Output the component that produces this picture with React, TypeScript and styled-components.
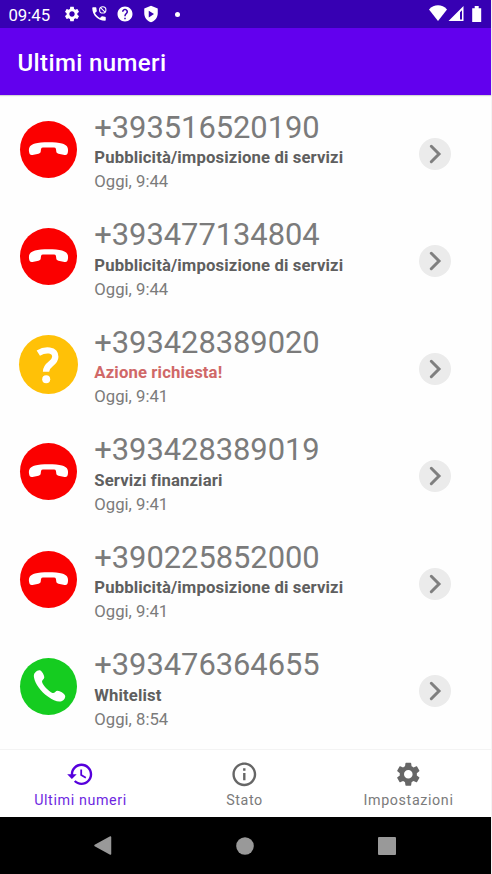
import React from "react";
import styled, { createGlobalStyle } from "styled-components";

const GlobalStyle = createGlobalStyle`
  *, *::before, *::after { box-sizing: border-box; }
  html, body { margin: 0; padding: 0; background: #f4f4f4; }
  body { font-family: Roboto, "Noto Sans", sans-serif; overflow: hidden; }
  svg { display: block; flex: none; }
`;

const Screen = styled.div`
  width: 491px;
  height: 874px;
  display: flex;
  flex-direction: column;
  background: #fefefe;
`;

const StatusBar = styled.header`
  height: 28px;
  flex: none;
  display: flex;
  align-items: center;
  justify-content: space-between;
  padding: 0 8px 0 8.4px;
  background: #3700b3;
  color: #fff;
`;

const StatusGroup = styled.div<{ $gap: number }>`
  display: flex;
  align-items: center;
  gap: ${(p) => p.$gap}px;
`;

const Clock = styled.time`
  width: 46.6px;
  font-size: 16.8px;
  line-height: 20px;
  padding-top: 1.5px;
`;

const Dot = styled.span`
  width: 5px;
  height: 5px;
  margin-left: 7px;
  border-radius: 50%;
  background: #fff;
`;

const AppBar = styled.div`
  height: 67px;
  flex: none;
  display: flex;
  align-items: center;
  padding: 2px 17.5px 0;
  background: #6200ee;
  box-shadow: 0 1px 1px rgba(0, 0, 0, 0.16);
`;

const Title = styled.h1`
  margin: 0;
  color: #fff;
  font-size: 24px;
  line-height: 30px;
  font-weight: 500;
  letter-spacing: 0.38px;
`;

const CallList = styled.main`
  flex: 1;
  min-height: 0;
  overflow: hidden;
  padding-top: 9px;
`;

const CallRow = styled.article`
  height: 107.5px;
  display: flex;
  align-items: flex-start;
  padding: 0 40px 0 19px;
`;

const Badge = styled.div<{ $color: string; $size: number }>`
  width: ${(p) => p.$size}px;
  height: ${(p) => p.$size}px;
  margin: ${(p) => 45 - p.$size / 2}px ${(p) => 46.3 - p.$size / 2}px 0 ${(p) => 29 - p.$size / 2}px;
  flex: none;
  display: flex;
  align-items: center;
  justify-content: center;
  border-radius: 50%;
  background: ${(p) => p.$color};
`;

const CallText = styled.div`
  flex: 1;
  min-width: 0;
  color: #7b7b7b;
  white-space: nowrap;
`;

const PhoneNumber = styled.div`
  padding-top: 5.7px;
  font-size: 30.9px;
  line-height: 36px;
  letter-spacing: -0.04px;
`;

const Reason = styled.div<{ $alert?: boolean }>`
  margin-top: 2.5px;
  font-size: 16.7px;
  line-height: 20px;
  font-weight: 700;
  letter-spacing: 0.13px;
  color: ${(p) => (p.$alert ? "#d06868" : "#5f5f5f")};
`;

const CallTime = styled.div`
  margin-top: 4.2px;
  font-size: 16.7px;
  line-height: 20px;
`;

const OpenButton = styled.button`
  width: 32px;
  height: 32px;
  margin-top: 33.5px;
  padding: 0;
  flex: none;
  display: flex;
  align-items: center;
  justify-content: center;
  border: 0;
  border-radius: 50%;
  background: #ebebeb;
`;

const BottomNav = styled.nav`
  height: 68px;
  flex: none;
  display: grid;
  grid-template-columns: repeat(3, 164px);
  justify-content: center;
  padding-right: 2px;
  border-top: 1px solid #f3f3f3;
  background: #fff;
`;

const NavItem = styled.a<{ $active?: boolean }>`
  display: flex;
  flex-direction: column;
  align-items: center;
  padding-top: 9.5px;
  color: ${(p) => (p.$active ? "#5600dc" : "#666")};
`;

const NavLabel = styled.span`
  margin-top: 3px;
  font-size: 14.3px;
  line-height: 18px;
  letter-spacing: 0.62px;
  opacity: 0.86;
`;

const SystemBar = styled.footer`
  height: 57px;
  flex: none;
  display: grid;
  grid-template-columns: repeat(3, 142px);
  justify-content: center;
  justify-items: center;
  align-items: center;
  padding-right: 2px;
  background: #000;
`;

const GEAR =
  "M19.14 12.94c.04-.3.06-.61.06-.94 0-.32-.02-.64-.07-.94l2.03-1.58c.18-.14.23-.41.12-.61l-1.92-3.32c-.12-.22-.37-.29-.59-.22l-2.39.96c-.5-.38-1.03-.7-1.62-.94l-.36-2.54c-.04-.24-.24-.41-.48-.41h-3.84c-.24 0-.43.17-.47.41l-.36 2.54c-.59.24-1.13.57-1.62.94l-2.39-.96c-.22-.08-.47 0-.59.22L2.74 8.87c-.12.21-.08.47.12.61l2.03 1.58c-.05.3-.09.63-.09.94s.02.64.07.94l-2.03 1.58c-.18.14-.23.41-.12.61l1.92 3.32c.12.22.37.29.59.22l2.39-.96c.5.38 1.03.7 1.62.94l.36 2.54c.05.24.24.41.48.41h3.84c.24 0 .44-.17.47-.41l.36-2.54c.59-.24 1.13-.56 1.62-.94l2.39.96c.22.08.47 0 .59-.22l1.92-3.32c.12-.22.07-.47-.12-.61l-2.01-1.58zM12 15.6c-1.98 0-3.6-1.62-3.6-3.6s1.62-3.6 3.6-3.6 3.6 1.62 3.6 3.6-1.62 3.6-3.6 3.6z";
const HISTORY =
  "M13 3c-4.97 0-9 4.03-9 9H1l3.89 3.89.07.14L9 12H6c0-3.87 3.13-7 7-7s7 3.13 7 7-3.13 7-7 7c-1.93 0-3.68-.79-4.94-2.06l-1.42 1.42C8.27 19.99 10.51 21 13 21c4.97 0 9-4.03 9-9s-4.03-9-9-9zm-1 5v5l4.28 2.54.72-1.21-3.5-2.08V8H12z";
const INFO =
  "M11 7h2v2h-2zm0 4h2v6h-2zm1-9C6.48 2 2 6.48 2 12s4.48 10 10 10 10-4.48 10-10S17.52 2 12 2zm0 18c-4.41 0-8-3.59-8-8s3.59-8 8-8 8 3.59 8 8-3.59 8-8 8z";
const HELP =
  "M12 2C6.48 2 2 6.48 2 12s4.48 10 10 10 10-4.48 10-10S17.52 2 12 2zm1 17h-2v-2h2v2zm2.07-7.75l-.9.92C13.45 12.9 13 13.5 13 15h-2v-.5c0-1.1.45-2.1 1.17-2.83l1.24-1.26c.37-.36.59-.86.59-1.41 0-1.1-.9-2-2-2s-2 .9-2 2H8c0-2.21 1.79-4 4-4s4 1.79 4 4c0 .88-.36 1.68-.93 2.25z";
const PHONE =
  "M20 15.5c-1.25 0-2.45-.2-3.57-.57-.35-.11-.74-.03-1.02.24l-2.2 2.2c-2.83-1.44-5.15-3.75-6.59-6.59l2.2-2.2c.28-.28.36-.67.25-1.02C8.7 6.45 8.5 5.25 8.5 4c0-.55-.45-1-1-1H4c-.55 0-1 .45-1 1 0 9.39 7.61 17 17 17 .55 0 1-.45 1-1v-3.5c0-.55-.45-1-1-1z";

function Glyph({ d, size }: { d: string; size: number }) {
  return (
    <svg width={size} height={size} viewBox="0 0 24 24" fill="currentColor">
      <path d={d} />
    </svg>
  );
}

type Kind = "blocked" | "unknown" | "allowed";

function KindBadge({ kind }: { kind: Kind }) {
  if (kind === "blocked") {
    return (
      <Badge $color="#fb0000" $size={57}>
        <svg width="57" height="57" viewBox="0 0 57 57" fill="#fff">
          <path d="M9.1 31C8.3 25.8 10.5 24 15 22.5C21 20.8 36 20.8 42 22.500C46.500 24 48.700 25.800 47.900 31C47.600 33.500 46.500 34.300 44.500 33.900L38.500 32.800C36.800 32.400 36.300 31.500 36.200 29.800L35.900 27.700Q35.500 26.400 34 26.400H23Q21.500 26.400 21.100 27.700L20.800 29.800C20.700 31.500 20.200 32.400 18.500 32.800L12.500 33.900C10.500 34.300 9.400 33.500 9.100 31Z" />
        </svg>
      </Badge>
    );
  }
  if (kind === "unknown") {
    return (
      <Badge $color="#ffc107" $size={59}>
        <svg width="59" height="59" viewBox="0 0 59 59">
          <path d="M19.3 18.2C26.5 13.7 36.3 14.3 36.3 21.8C36.3 29 27 28.5 27 36.7" fill="none" stroke="#fff" strokeWidth="6.3" />
          <circle cx="27.2" cy="44.3" r="4" fill="#fff" />
        </svg>
      </Badge>
    );
  }
  return (
    <Badge $color="#15cc20" $size={57}>
      <svg width="57" height="57" viewBox="0 0 57 57" fill="#fff">
        <path d="M15.2 14.5C17 12.4 19.2 11.6 20.5 12.5C22.3 13.6 24.2 17 24.3 19.2C24.4 21.3 21.9 21.6 22 23.6C22.3 27 28.8 33.7 32.5 35C34.7 35.7 35.3 32.8 37.6 32.8C40 32.9 44 35.4 45 37.4C45.8 39.2 44.2 42 41.5 43.2C38.2 44.4 33 42.3 28.2 38.8C20.6 33.4 15.2 26 14 19.5C13.7 17.4 13.8 16 15.2 14.5Z" />
      </svg>
    </Badge>
  );
}

interface Call {
  number: string;
  reason: string;
  time: string;
  kind: Kind;
}

const calls: Call[] = [
  { number: "+393516520190", reason: "Pubblicità/imposizione di servizi", time: "Oggi, 9:44", kind: "blocked" },
  { number: "+393477134804", reason: "Pubblicità/imposizione di servizi", time: "Oggi, 9:44", kind: "blocked" },
  { number: "+393428389020", reason: "Azione richiesta!", time: "Oggi, 9:41", kind: "unknown" },
  { number: "+393428389019", reason: "Servizi finanziari", time: "Oggi, 9:41", kind: "blocked" },
  { number: "+390225852000", reason: "Pubblicità/imposizione di servizi", time: "Oggi, 9:41", kind: "blocked" },
  { number: "+393476364655", reason: "Whitelist", time: "Oggi, 8:54", kind: "allowed" },
];

const tabs = [
  { label: "Ultimi numeri", icon: HISTORY, active: true },
  { label: "Stato", icon: INFO, active: false },
  { label: "Impostazioni", icon: GEAR, active: false },
];

export default function App() {
  return (
    <>
      <GlobalStyle />
      <Screen>
        <StatusBar>
          <StatusGroup $gap={8.3}>
            <Clock>09:45</Clock>
            <Glyph d={GEAR} size={18} />
            <svg width="18" height="18" viewBox="0 0 24 24">
              <path d={PHONE} fill="#fff" />
              <circle cx="17" cy="6.5" r="4.2" fill="none" stroke="#fff" strokeWidth="1.5" />
              <path d="M14 3.5l6 6" stroke="#fff" strokeWidth="1.5" />
            </svg>
            <Glyph d={HELP} size={18} />
            <svg width="18" height="18" viewBox="0 0 24 24">
              <path fill="#fff" fillRule="evenodd" d="M12 1L3 4.5V11c0 5.6 3.8 10.5 9 12 5.2-1.5 9-6.4 9-12V4.5zM9 7.5l7 4.5-7 4.5z" />
            </svg>
            <Dot />
          </StatusGroup>
          <StatusGroup $gap={0}>
            <svg width="54" height="20" viewBox="0 0 54 20" fill="#fff">
              <path d="M0 5.5C5-.1 13-.1 18 5.5L9 17z" />
              <path fillRule="evenodd" d="M34.5 2v15H19.5zM31 8.2v7.3h2V6.2z" />
              <path d="M43.2 4.2h2.5V2h4v2.2h2.5v13.8h-9z" />
            </svg>
          </StatusGroup>
        </StatusBar>
        <AppBar>
          <Title>Ultimi numeri</Title>
        </AppBar>
        <CallList>
          {calls.map((call) => (
            <CallRow key={call.number}>
              <KindBadge kind={call.kind} />
              <CallText>
                <PhoneNumber>{call.number}</PhoneNumber>
                <Reason $alert={call.kind === "unknown"}>{call.reason}</Reason>
                <CallTime>{call.time}</CallTime>
              </CallText>
              <OpenButton aria-label="Dettagli">
                <svg width="32" height="32" viewBox="0 0 32 32" fill="none" stroke="#7f7f7f" strokeWidth="3" strokeLinecap="round">
                  <path d="M12.3 8.3L20 16l-7.7 7.7" />
                </svg>
              </OpenButton>
            </CallRow>
          ))}
        </CallList>
        <BottomNav>
          {tabs.map((tab) => (
            <NavItem key={tab.label} $active={tab.active}>
              <Glyph d={tab.icon} size={28.6} />
              <NavLabel>{tab.label}</NavLabel>
            </NavItem>
          ))}
        </BottomNav>
        <SystemBar>
          <svg width="20" height="22" viewBox="0 0 20 22">
            <path d="M17.5 2v17L2 10.5z" fill="#999" stroke="#999" strokeWidth="1.5" strokeLinejoin="round" />
          </svg>
          <svg width="18" height="18" viewBox="0 0 18 18">
            <circle cx="9" cy="9" r="8.8" fill="#999" />
          </svg>
          <svg width="18" height="18" viewBox="0 0 18 18">
            <rect width="18" height="18" rx="1" fill="#999" />
          </svg>
        </SystemBar>
      </Screen>
    </>
  );
}
